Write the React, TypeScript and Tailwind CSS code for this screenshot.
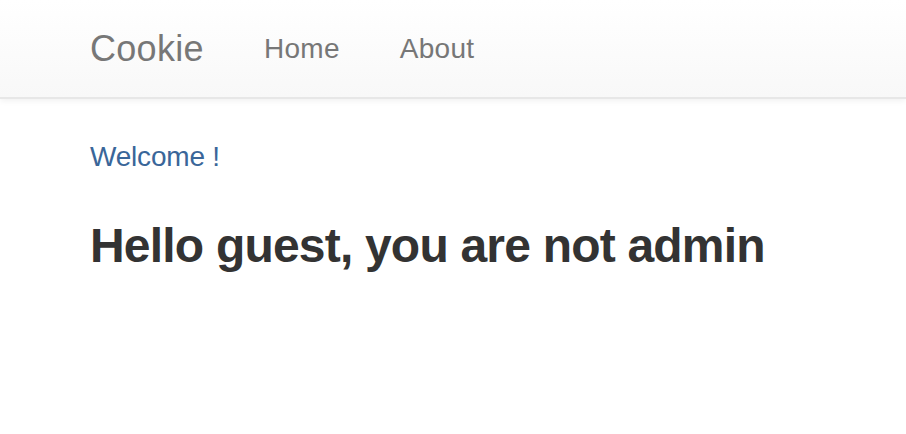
export default function App() {
  return (
    <div className="min-h-[434px] bg-white" style={{ fontFamily: '"Liberation Sans", Arial, sans-serif' }}>
      <nav className="h-[99px] border-b-2 border-[#e7e7e7] bg-gradient-to-b from-white to-[#f8f8f8] shadow-[0_2px_6px_rgba(0,0,0,0.06)]">
        <div className="flex h-full items-center pl-[90px]">
          <span className="text-[36px] leading-[40px] tracking-[0.3px] text-[#777777]">Cookie</span>
          <span className="ml-[60px] text-[28px] leading-[40px] tracking-[0.3px] text-[#777777]">Home</span>
          <span className="ml-[60px] text-[28px] leading-[40px] tracking-[0.3px] text-[#777777]">About</span>
        </div>
      </nav>
      <div className="pl-[90px]">
        <p className="mt-[38px] text-[28px] leading-[40px] tracking-[-0.2px] text-[#3a6699]">Welcome !</p>
        <h3 className="mt-[43px] text-[48px] font-bold leading-[52.8px] tracking-[-0.8px] text-[#333333]">Hello guest, you are not admin</h3>
      </div>
    </div>
  );
}
